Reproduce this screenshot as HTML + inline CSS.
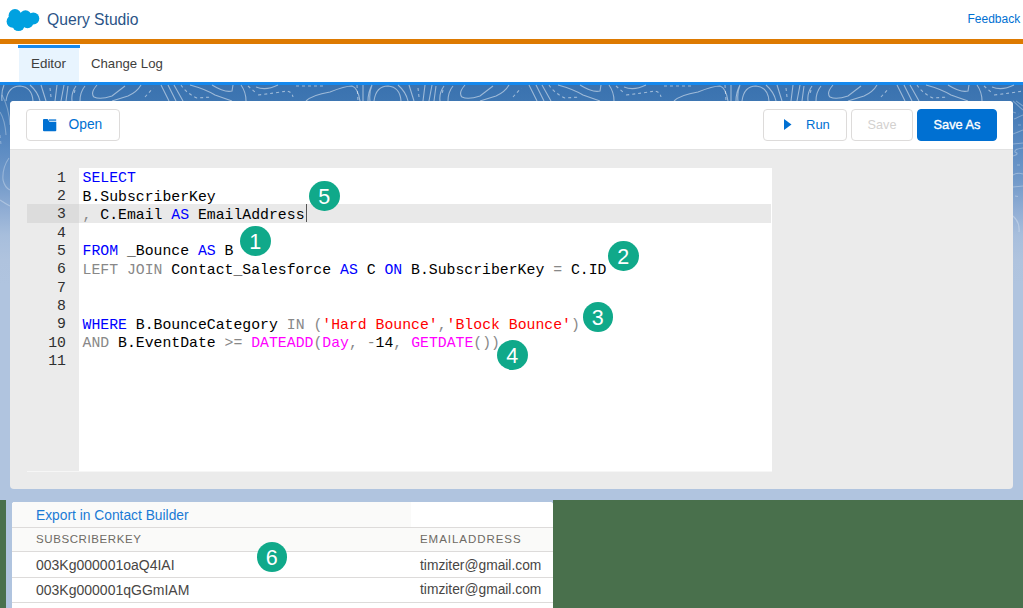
<!DOCTYPE html>
<html><head><meta charset="utf-8">
<style>
*{box-sizing:border-box}
html,body{margin:0;padding:0}
body{width:1023px;height:608px;overflow:hidden;position:relative;background:#fff;font-family:"Liberation Sans",sans-serif;}
.abs{position:absolute}
#hdr{left:0;top:0;width:1023px;height:39px;background:#fff}
#title{left:47px;top:10.5px;font-size:15.7px;color:#2b5487;white-space:nowrap;line-height:18px}
#feedback{left:967.5px;top:11.8px;font-size:12px;color:#0070d2;line-height:15px;white-space:nowrap}
#orange{left:0;top:39px;width:1023px;height:4.5px;background:#dd7a01}
#tabs{left:0;top:43.5px;width:1023px;height:38.5px;background:#fff}
#tabbar{left:17.5px;top:45px;width:62px;height:3px;background:#1589ee}
#tabbg{left:19px;top:48px;width:60px;height:34px;background:#e8f4fe}
.tabtxt{font-size:13.4px;color:#3e3e3c;top:56px;line-height:15px;white-space:nowrap}
#blue{left:0;top:82px;width:1023px;height:3px;background:#1589ee}
#band{left:0;top:85px;width:1023px;height:523px;background:linear-gradient(to bottom,#3a72af 0px,#3e76b2 16px,#5d8cc3 65px,#7199c9 95px,#90add4 125px,#a7bedc 150px,#afc3de 175px,#b0c4df 200px,#b0c4df 523px)}
#panel{left:10px;top:101px;width:1003px;height:388px;background:#ebebeb;border-radius:4px;overflow:hidden}
#phead{left:0;top:0;width:1003px;height:49px;background:#fff;border-bottom:1px solid #e2e2e2}
.btn{position:absolute;top:8px;height:32px;border:1px solid #dddbda;border-radius:4px;background:#fff;font-size:13px;line-height:30px;white-space:nowrap}
#code{left:69px;top:66.5px;width:693px;height:304px;background:#fff}
#hl-g{left:17px;top:103px;width:52px;height:18.5px;background:#dcdcdc}
#hl-c{left:69px;top:103px;width:692px;height:18.5px;background:#e9e9e9}
#bline{left:17px;top:369.5px;width:745px;height:1px;background:#f6f6f6}
.ln{position:absolute;left:17px;width:39px;text-align:right;font-family:"Liberation Mono",monospace;font-size:14.8px;color:#2f2f2f;line-height:18.32px}
#src{left:72.5px;top:68.2px;font-family:"Liberation Mono",monospace;font-size:14.8px;line-height:18.32px;color:#000;white-space:pre}
.k{color:#0000ff}.o{color:#888888}.s{color:#ff0000}.f{color:#ff00ff}
.badge{position:absolute;width:30.5px;height:30px;border-radius:50%;background:#10a98a;color:#fff;font-size:21.5px;line-height:33px;text-align:center}
#greenL{left:0;top:500px;width:6px;height:108px;background:#49704c}
#greenR{left:553px;top:500px;width:470px;height:108px;background:#49704c}
#table{left:12px;top:502px;width:541px;height:106px;background:#fff;border-radius:3px 3px 0 0;overflow:hidden}
.row{position:absolute;left:0;width:541px;border-bottom:1px solid #dddbda}
.cell{position:absolute;white-space:nowrap}
</style></head><body>
<div id="hdr" class="abs">
  <svg class="abs" style="left:0;top:0" width="45" height="38" viewBox="0 0 45 38">
    <g fill="#00a1e0">
      <circle cx="15" cy="15.5" r="6.4"/>
      <circle cx="25.5" cy="16" r="5.8"/>
      <circle cx="33.3" cy="18.5" r="6"/>
      <circle cx="12.8" cy="21.5" r="6.2"/>
      <circle cx="18.5" cy="24.8" r="6.3"/>
      <circle cx="27.5" cy="22.5" r="5.8"/>
      <rect x="14" y="15" width="18" height="10"/>
    </g>
  </svg>
  <div id="title" class="abs">Query Studio</div>
  <div id="feedback" class="abs">Feedback</div>
</div>
<div id="orange" class="abs"></div>
<div id="tabs" class="abs"></div>
<div id="tabbg" class="abs"></div>
<div id="tabbar" class="abs"></div>
<div class="abs tabtxt" style="left:31px">Editor</div>
<div class="abs tabtxt" style="left:91px;font-size:13.2px">Change Log</div>
<div id="blue" class="abs"></div>
<div id="band" class="abs"></div>
<svg class="abs" style="left:0;top:0" width="1023" height="300" viewBox="0 0 1023 300">
<g fill="none" stroke="#fff" stroke-opacity="0.5" stroke-width="1.1">
<path d="M 2,101 Q 1,92 4,85 M 6,101 Q 8,86 20,86 Q 32,87 33,101 M 30,85 Q 38,92 40,101 M 41,85 L 46,101 M 57,85 L 55,101 M 64,85 L 61,101 M 68,86 L 66,101 M 76,86 Q 71,93 72,101 M 85,86 Q 80,92 80,101 M 97,85 Q 90,93 94,97 Q 100,100 112,96 L 125,86 M 112,101 L 128,96 M 128,96 Q 137,92 141,85 M 161,85 L 169,101 M 168,85 L 176,101 M 174,85 L 183,101 M 190,85 Q 205,89 215,95 L 232,101 M 212,85 Q 225,93 232,91 L 233,85 M 241,85 Q 246,92 246,101 M 256,87 Q 266,91 278,85 M 306,101 Q 312,95 330,92 Q 345,86 352,86 Q 358,88 360,101 M 363,85 L 363,101 M 372,85 Q 368,92 368,101 M 370,101 Q 369,92 372,85 M 374,101 Q 376,86 388,86 Q 400,87 401,101 M 398,85 Q 406,92 408,101 M 409,85 L 414,101 M 425,85 L 423,101 M 432,85 L 429,101 M 436,86 L 434,101 M 444,86 Q 439,93 440,101 M 453,86 Q 448,92 448,101 M 465,85 Q 458,93 462,97 Q 468,100 480,96 L 493,86 M 480,101 L 496,96 M 496,96 Q 505,92 509,85 M 529,85 L 537,101 M 536,85 L 544,101 M 542,85 L 551,101 M 558,85 Q 573,89 583,95 L 600,101 M 580,85 Q 593,93 600,91 L 601,85 M 609,85 Q 614,92 614,101 M 624,87 Q 634,91 646,85 M 674,101 Q 680,95 698,92 Q 713,86 720,86 Q 726,88 728,101 M 731,85 L 731,101 M 740,85 Q 736,92 736,101 M 738,101 Q 737,92 740,85 M 742,101 Q 744,86 756,86 Q 768,87 769,101 M 766,85 Q 774,92 776,101 M 777,85 L 782,101 M 793,85 L 791,101 M 800,85 L 797,101 M 804,86 L 802,101 M 812,86 Q 807,93 808,101 M 821,86 Q 816,92 816,101 M 833,85 Q 826,93 830,97 Q 836,100 848,96 L 861,86 M 848,101 L 864,96 M 864,96 Q 873,92 877,85 M 897,85 L 905,101 M 904,85 L 912,101 M 910,85 L 919,101 M 926,85 Q 941,89 951,95 L 968,101 M 948,85 Q 961,93 968,91 L 969,85 M 977,85 Q 982,92 982,101 M 992,87 Q 1002,91 1014,85 M 1042,101 Q 1048,95 1066,92 Q 1081,86 1088,86 Q 1094,88 1096,101 M 1099,85 L 1099,101 M 1108,85 Q 1104,92 1104,101"/>
<path d="M2,95 Q9,108 10,125 M0,112 Q5,120 6,135 M9,158 Q2,168 3,180 Q5,188 10,190 M0,200 Q6,204 10,206 M1013,101 L1023,110 M1016,101 L1023,106 M1014,119 Q1019,117 1023,115 M1013,134 Q1018,132 1023,130 M1013,144 L1023,143 M1023,148 Q1014,149 1015,152 Q1020,154 1013,156 M1013,175 Q1018,172 1023,174 M1013,187 L1023,186 M1013,216 Q1020,222 1019,232" stroke-opacity="0.3"/>
</g>
<g fill="none" stroke="#fff" stroke-opacity="0.5" stroke-width="1.1" stroke-dasharray="3 3">
<path d="M 50,88 L 51,97 M 75,90 L 74,94 M 145,97 L 153,88 M 181,85 Q 186,93 197,98 L 212,97 M 248,86 L 256,93 M 296,86 L 325,86 M 258,95 Q 275,93 287,91 Q 292,92 293,97 M 357,85 L 358,101 M 418,88 L 419,97 M 443,90 L 442,94 M 513,97 L 521,88 M 549,85 Q 554,93 565,98 L 580,97 M 616,86 L 624,93 M 664,86 L 693,86 M 626,95 Q 643,93 655,91 Q 660,92 661,97 M 725,85 L 726,101 M 786,88 L 787,97 M 811,90 L 810,94 M 881,97 L 889,88 M 917,85 Q 922,93 933,98 L 948,97 M 984,86 L 992,93 M 1032,86 L 1061,86 M 994,95 Q 1011,93 1023,91 Q 1028,92 1029,97 M 1093,85 L 1094,101"/>
<path d="M0,135 L1,145 M1013,112 L1019,114 M1018,125 L1023,125 M1017,165 L1023,165 M1015,196 L1021,197" stroke-opacity="0.3"/>
</g>
</svg>
<div id="panel" class="abs">
  <div id="phead" class="abs"></div>
  <div class="btn" style="left:16px;width:94px">
    <svg class="abs" style="left:16.3px;top:9px" width="14" height="13" viewBox="0 0 14 13"><path fill="#0070d2" d="M0 1Q0 0 1 0H4.6L6.4 2.7H13.3V11.2Q13.3 12.2 12.3 12.2H1Q0 12.2 0 11.2Z"/><rect x="5.8" y="0.4" width="7.4" height="1.3" fill="#0070d2"/></svg>
    <span class="abs" style="left:41.5px;top:0;color:#0070d2;font-size:13.8px">Open</span>
  </div>
  <div class="btn" style="left:753px;width:84px">
    <svg class="abs" style="left:20.3px;top:9px" width="8" height="11" viewBox="0 0 8 12" preserveAspectRatio="none"><path fill="#0070d2" d="M0 0L7.5 6L0 12z"/></svg>
    <span class="abs" style="left:42px;top:0;color:#0070d2">Run</span>
  </div>
  <div class="btn" style="left:841px;width:62px;color:#d3d1cf;text-align:center;font-size:12.7px">Save</div>
  <div class="btn" style="left:907px;width:80px;background:#0070d2;border-color:#0070d2;color:#fff;text-align:center;font-size:12.8px;-webkit-text-stroke:0.35px #fff">Save As</div>

  <div id="code" class="abs"></div>
  <div id="hl-g" class="abs"></div>
  <div id="hl-c" class="abs"></div>
  <div id="bline" class="abs"></div>
</div>
<div class="abs" style="left:10px;top:101px;width:0;height:0">
  <div class="ln" style="top:67.7px">1<br>2<br>3<br>4<br>5<br>6<br>7<br>8<br>9<br>10<br>11</div>
  <div id="src" class="abs"><span class="k">SELECT</span>
B.SubscriberKey
<span class="o">,</span> C.Email <span class="k">AS</span> EmailAddress

<span class="k">FROM</span> _Bounce <span class="k">AS</span> B
<span class="o">LEFT JOIN</span> Contact_Salesforce <span class="k">AS</span> C <span class="k">ON</span> B.SubscriberKey <span class="o">=</span> C.ID


<span class="k">WHERE</span> B.BounceCategory <span class="o">IN (</span><span class="s">'Hard Bounce'</span><span class="o">,</span><span class="s">'Block Bounce'</span><span class="o">)</span>
<span class="o">AND</span> B.EventDate <span class="o">&gt;=</span> <span class="f">DATEADD</span><span class="o">(</span><span class="f">Day</span><span class="o">, -</span>14<span class="o">,</span> <span class="f">GETDATE</span><span class="o">())</span>
</div>
  <div class="abs" style="left:295.5px;top:103px;width:1px;height:18px;background:#555"></div>
</div>

<div class="badge" style="left:309px;top:181px">5</div>
<div class="badge" style="left:240px;top:226px">1</div>
<div class="badge" style="left:608px;top:241px">2</div>
<div class="badge" style="left:582.5px;top:302px">3</div>
<div class="badge" style="left:497px;top:340px">4</div>

<div id="greenL" class="abs"></div>
<div id="greenR" class="abs"></div>
<div id="table" class="abs">
  <div class="row" style="top:0;height:26px;background:#fff"><div class="abs" style="left:0;top:0;width:399px;height:25px;background:#fafaf9"></div>
    <div class="cell" style="left:24px;top:6px;font-size:13.8px;color:#1b7ad5">Export in Contact Builder</div></div>
  <div class="row" style="top:25.5px;height:24.5px;background:#fafaf9;">
    <div class="cell" style="left:24px;top:5.2px;font-size:11.5px;letter-spacing:0.6px;color:#6e6a64">SUBSCRIBERKEY</div>
    <div class="cell" style="left:408px;top:5.2px;font-size:11.5px;letter-spacing:0.95px;color:#6e6a64">EMAILADDRESS</div></div>
  <div class="row" style="top:50px;height:26px">
    <div class="cell" style="left:24px;top:5px;font-size:14px;color:#484644">003Kg000001oaQ4IAI</div>
    <div class="cell" style="left:408px;top:5.6px;font-size:13.8px;color:#484644">timziter@gmail.com</div></div>
  <div class="row" style="top:75.5px;height:25px">
    <div class="cell" style="left:24px;top:4px;font-size:14px;color:#484644">003Kg000001qGGmIAM</div>
    <div class="cell" style="left:408px;top:4.6px;font-size:13.8px;color:#484644">timziter@gmail.com</div></div>
</div>
<div class="badge" style="left:256.5px;top:541.5px">6</div>
</body></html>
